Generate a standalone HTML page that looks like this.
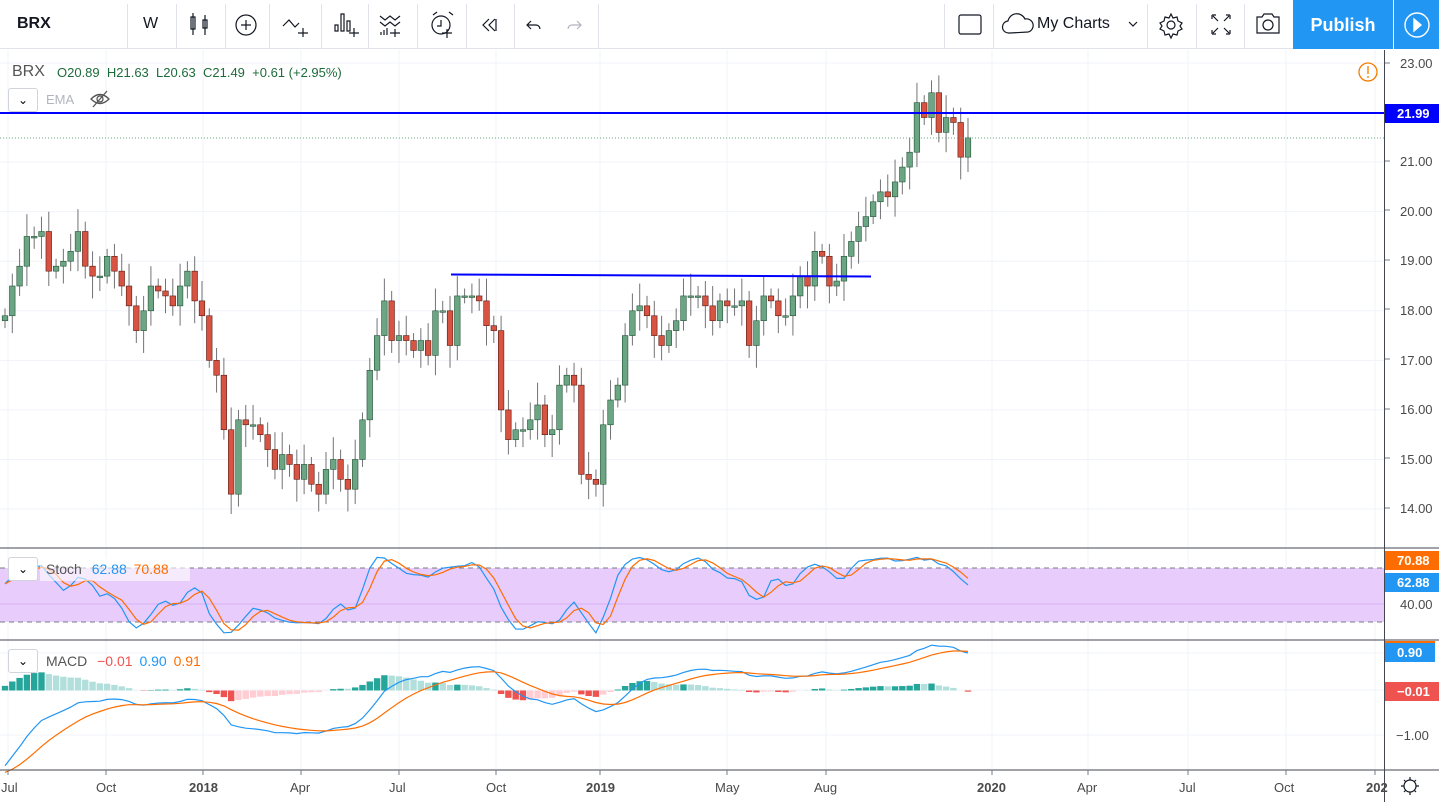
<!DOCTYPE html>
<html><head><meta charset="utf-8"><style>
*{margin:0;padding:0;box-sizing:border-box}
body{width:1439px;height:802px;overflow:hidden;background:#fff;font-family:"Liberation Sans",sans-serif;position:relative}
.tb{position:absolute;top:0;left:0;width:1439px;height:49px;border-bottom:1px solid #e0e3eb;background:#fff}
.sep{position:absolute;top:4px;width:1px;height:44px;background:#e0e3eb}
.t{position:absolute;font-size:13px}
.ax{position:absolute;font-size:13px;color:#4a4a4a}
.lbl{position:absolute;left:1385px;width:54px;height:19px;color:#fff;font-size:13px;font-weight:bold;line-height:19px;padding-left:12px}
</style></head><body>
<div class="tb">
 <div class="t" style="left:17px;top:15px;font-size:16px;font-weight:bold;color:#131722">BRX</div>
 <div class="sep" style="left:127px"></div>
 <div class="t" style="left:143px;top:15px;font-size:16px;color:#131722">W</div>
 <div class="sep" style="left:176px"></div>
 <div class="sep" style="left:225px"></div>
 <div class="sep" style="left:269px"></div><div class="sep" style="left:321px"></div><div class="sep" style="left:368px"></div><div class="sep" style="left:417px"></div><div class="sep" style="left:466px"></div><div class="sep" style="left:514px"></div><div class="sep" style="left:598px"></div>
 <div class="sep" style="left:944px"></div><div class="sep" style="left:993px"></div><div class="sep" style="left:1147px"></div><div class="sep" style="left:1196px"></div><div class="sep" style="left:1244px"></div>
 <svg style="position:absolute;left:0;top:0" width="1300" height="49" fill="none" stroke="#131722" stroke-width="1.2">
  <path d="M193 13v22M191 17h4v12h-4zM205 15v20M203 20h4v8h-4z"/>
  <circle cx="246" cy="25" r="10"/><path d="M246 20v10M241 25h10"/>
  <path d="M283 26l6-6 6 7 4-4M303 28v9M298 33h10"/>
  <path d="M335 25h3v6h-3zM341 14h3v17h-3zM347 21h3v10h-3zM354 28v9M349 33h10"/>
  <path d="M380 16l5 4 5-4 5 4 5-4M380 22l5 4 5-4 5 4 5-4M381 32v3M384 30v5M387 28v7M395 29v8M390 33h10"/>
  <circle cx="441" cy="25" r="9"/><path d="M441 20v6h-4M433 15l4-3M449 12l4 3M447 29v9M442 33h10"/>
  <path d="M489 19l-6 6 6 6M495 19l-6 6 6 6M496 19v12"/>
  <path d="M531 21l-4 4 4 4M527 25h9a4 4 0 014 4"/>
  <path stroke="#b2b5be" d="M577 21l4 4-4 4M581 25h-9a4 4 0 00-4 4"/>
 </svg>
 <svg style="position:absolute;left:940px;top:0" width="360" height="49" fill="none" stroke="#131722" stroke-width="1.2">
  <rect x="19" y="15" width="22" height="19" rx="2"/>
  <path d="M70 33h-1a6 6 0 01-1-12 9 9 0 0117-2 6 6 0 013 13z"/>
  <path d="M189 22l4 4 4-4"/>
  <circle cx="231" cy="25" r="4"/><path d="M231 14l2 4 4-1 1 4 4 2-2 3 2 3-4 2-1 4-4-1-2 4-2-4-4 1-1-4-4-2 2-3-2-3 4-2 1-4 4 1z"/>
  <path d="M272 15h4M272 15v4M290 15h-4M290 15v4M272 34h4M272 34v-4M290 34h-4M290 34v-4M273 16l5 5M289 16l-5 5M273 33l5-5M289 33l-5-5"/>
  <path d="M317 17h5l2-3h8l2 3h5v16h-22z"/><circle cx="328" cy="25" r="5"/>
 </svg>
 <div class="t" style="left:1037px;top:15px;font-size:16px;color:#131722">My Charts</div>
 <div style="position:absolute;left:1293px;top:0;width:100px;height:49px;background:#2196f3;color:#fff;font-size:18px;font-weight:bold;text-align:center;line-height:50px">Publish</div>
 <div style="position:absolute;left:1394px;top:0;width:45px;height:49px;background:#2196f3"><svg width="45" height="49" fill="none" stroke="#fff" stroke-width="1.4"><circle cx="23" cy="25" r="12"/><path d="M20 19l7 6-7 6z" fill="#fff"/></svg></div>
</div>

<svg id="c" style="position:absolute;left:0;top:50px" width="1439" height="752"></svg>

<div class="t" style="left:12px;top:63px;font-size:16px;color:#555">BRX</div>
<div class="t" style="left:57px;top:65px;color:#1e6b3a">O20.89&nbsp; H21.63&nbsp; L20.63&nbsp; C21.49&nbsp; +0.61 (+2.95%)</div>
<div style="position:absolute;left:8px;top:88px;width:30px;height:24px;border:1px solid #d1d4dc;border-radius:3px;background:#fff;font-size:12px;text-align:center;line-height:22px">&#8964;</div>
<div class="t" style="left:46px;top:92px;color:#b2b5be">EMA</div>
<svg style="position:absolute;left:89px;top:89px" width="22" height="20" fill="none" stroke="#555" stroke-width="1.3"><path d="M2 10q9-9 18 0q-9 9-18 0z"/><circle cx="11" cy="10" r="3"/><path d="M4 18L18 2"/></svg>
<svg style="position:absolute;left:1357px;top:61px" width="22" height="22" fill="none" stroke="#f57c00" stroke-width="1.3"><circle cx="11" cy="11" r="9"/><path d="M11 5v8M11 15v2"/></svg>

<div style="position:absolute;left:8px;top:557px;width:30px;height:24px;border:1px solid #d1d4dc;border-radius:3px;background:#fff;font-size:12px;text-align:center;line-height:22px">&#8964;</div>
<div style="position:absolute;left:40px;top:557px;width:150px;height:24px;background:rgba(255,255,255,.6)"></div>
<div class="t" style="left:46px;top:561px;font-size:14px;color:#555">Stoch <span style="color:#2196f3;margin-left:6px">62.88</span> <span style="color:#ff6d00;margin-left:3px">70.88</span></div>
<div style="position:absolute;left:8px;top:649px;width:30px;height:24px;border:1px solid #d1d4dc;border-radius:3px;background:#fff;font-size:12px;text-align:center;line-height:22px">&#8964;</div>
<div class="t" style="left:46px;top:653px;font-size:14px;color:#555">MACD <span style="color:#ef5350;margin-left:6px">&minus;0.01</span> <span style="color:#2196f3;margin-left:3px">0.90</span> <span style="color:#ff6d00;margin-left:3px">0.91</span></div>

<div class="ax" style="left:1400px;top:56px">23.00</div>
<div class="ax" style="left:1400px;top:154px">21.00</div>
<div class="ax" style="left:1400px;top:204px">20.00</div>
<div class="ax" style="left:1400px;top:253px">19.00</div>
<div class="ax" style="left:1400px;top:303px">18.00</div>
<div class="ax" style="left:1400px;top:353px">17.00</div>
<div class="ax" style="left:1400px;top:402px">16.00</div>
<div class="ax" style="left:1400px;top:452px">15.00</div>
<div class="ax" style="left:1400px;top:501px">14.00</div>
<div class="lbl" style="top:104px;background:#0000ff">21.99</div>
<div class="lbl" style="top:551px;background:#ff6d00">70.88</div>
<div class="lbl" style="top:573px;background:#2196f3">62.88</div>
<div class="ax" style="left:1400px;top:597px">40.00</div>
<div style="position:absolute;left:1385px;top:641px;width:50px;height:2px;background:#ff6d00"></div>
<div class="lbl" style="top:643px;background:#2196f3;width:50px">0.90</div>
<div class="lbl" style="top:682px;background:#ef5350">&minus;0.01</div>
<div class="ax" style="left:1396px;top:728px">&minus;1.00</div>

<div class="ax" style="left:1px;top:780px">Jul</div>
<div class="ax" style="left:96px;top:780px">Oct</div>
<div class="ax" style="left:189px;top:780px;font-weight:bold">2018</div>
<div class="ax" style="left:290px;top:780px">Apr</div>
<div class="ax" style="left:389px;top:780px">Jul</div>
<div class="ax" style="left:486px;top:780px">Oct</div>
<div class="ax" style="left:586px;top:780px;font-weight:bold">2019</div>
<div class="ax" style="left:715px;top:780px">May</div>
<div class="ax" style="left:814px;top:780px">Aug</div>
<div class="ax" style="left:977px;top:780px;font-weight:bold">2020</div>
<div class="ax" style="left:1077px;top:780px">Apr</div>
<div class="ax" style="left:1179px;top:780px">Jul</div>
<div class="ax" style="left:1274px;top:780px">Oct</div>
<div class="ax" style="left:1366px;top:780px;font-weight:bold">202</div>
<svg style="position:absolute;left:1399px;top:775px" width="22" height="22" fill="none" stroke="#131722" stroke-width="1.2"><circle cx="11" cy="11" r="6"/><path d="M11 2v3M11 17v3M2 11h3M17 11h3M5 5l2 2M15 15l2 2M5 17l2-2M15 7l2-2"/></svg>

<script>
var C=[17.9,18.5,18.9,19.5,19.5,19.6,18.8,18.9,19.0,19.2,19.6,18.9,18.7,18.7,19.1,18.8,18.5,18.1,17.6,18.0,18.5,18.4,18.3,18.1,18.5,18.8,18.2,17.9,17.0,16.7,15.6,14.3,15.8,15.7,15.7,15.5,15.2,14.8,15.1,14.9,14.6,14.9,14.5,14.3,14.8,15.0,14.6,14.4,15.0,15.8,16.8,17.5,18.2,17.4,17.5,17.4,17.2,17.4,17.1,18.0,18.0,17.3,18.3,18.3,18.3,18.2,17.7,17.6,16.0,15.4,15.6,15.6,15.8,16.1,15.5,15.6,16.5,16.7,16.5,14.7,14.6,14.5,15.7,16.2,16.5,17.5,18.0,18.1,17.9,17.5,17.3,17.6,17.8,18.3,18.3,18.3,18.1,17.8,18.2,18.1,18.1,18.2,17.3,17.8,18.3,18.2,17.9,17.9,18.3,18.7,18.5,19.2,19.1,18.5,18.6,19.1,19.4,19.7,19.9,20.2,20.4,20.3,20.6,20.9,21.2,22.2,21.9,22.4,21.6,21.9,21.8,21.1,21.49];
var n=C.length,x0=5,x1=968,dx=(x1-x0)/(n-1),O=50;
function py(p){return 63+(23-p)*49.56-O}
var s='';
[8,106,203,301,399,496,600,727,826,992,1088,1188,1286,1375].forEach(function(x){s+='<line x1="'+x+'" y1="0" x2="'+x+'" y2="720" stroke="#f0f3fa"/>'});
for(var p=14;p<=23;p++){var y=py(p);s+='<line x1="0" y1="'+y+'" x2="1384" y2="'+y+'" stroke="#f0f3fa"/>';}
s+='<rect x="0" y="518" width="1384" height="54" fill="#e8ccfb"/>';
s+='<line x1="0" y1="554" x2="1384" y2="554" stroke="#d7b0f5"/>';
s+='<line x1="0" y1="518" x2="1384" y2="518" stroke="#787b86" stroke-dasharray="5,4"/><line x1="0" y1="572" x2="1384" y2="572" stroke="#787b86" stroke-dasharray="5,4"/>';
[603,640,685].forEach(function(y){s+='<line x1="0" y1="'+y+'" x2="1384" y2="'+y+'" stroke="#f0f3fa"/>'});
var H=[],L=[];
for(var i=0;i<n;i++){var o=i?C[i-1]:17.8,c=C[i],x=x0+i*dx;var hi=Math.max(o,c)+0.15+((i*37)%7)/20,lo=Math.min(o,c)-0.15-((i*53)%7)/20;H.push(hi);L.push(lo);
var col=c>=o?'#6ba583':'#d75442',bc=c>=o?'#225437':'#5b1a13';
s+='<line x1="'+x+'" y1="'+py(hi)+'" x2="'+x+'" y2="'+py(lo)+'" stroke="#737375"/>';
var yt=py(Math.max(o,c)),h=Math.max(1.5,Math.abs(o-c)*49.56);
s+='<rect x="'+(x-2.8)+'" y="'+yt+'" width="5.6" height="'+h+'" fill="'+col+'" stroke="'+bc+'" stroke-width="0.6"/>';}
s+='<line x1="0" y1="63" x2="1384" y2="63" stroke="#0000ff" stroke-width="2"/>';
s+='<line x1="451" y1="224.5" x2="871" y2="226.5" stroke="#0000ff" stroke-width="2"/>';
s+='<line x1="0" y1="88" x2="1384" y2="88" stroke="#6ba583" stroke-dasharray="1,2"/>';
function sy(v){return 590-v*0.9}
var K=[];for(var i=0;i<n;i++){var a=Math.max(0,i-13),mx=-1e9,mn=1e9;for(var j=a;j<=i;j++){mx=Math.max(mx,H[j]);mn=Math.min(mn,L[j]);}K.push((C[i]-mn)/(mx-mn)*100);}
function sma(a,k){return a.map(function(v,i){var s=0,c=0;for(var j=Math.max(0,i-k+1);j<=i;j++){s+=a[j];c++}return s/c})}
var Ks=sma(K,3),D=sma(Ks,3);
function pl(a,f,col){var d='';a.forEach(function(v,i){d+=(i?'L':'M')+(x0+i*dx).toFixed(1)+' '+f(v).toFixed(1)});return '<path d="'+d+'" fill="none" stroke="'+col+'" stroke-width="1.2"/>'}
s+=pl(Ks,sy,'#2196f3')+pl(D,sy,'#ff6d00');
function ema(a,k,seed){var m=2/(k+1),r=[],e=seed;a.forEach(function(v){e=v*m+e*(1-m);r.push(e)});return r}
var e12=ema(C,12,C[0]-0.6),e26=ema(C,26,C[0]+1.3),M=e12.map(function(v,i){return v-e26[i]}),S=ema(M,9,-1.9);
function my(v){return 640.5-v*44}
for(var i=0;i<n;i++){var hh=M[i]-S[i],x=x0+i*dx,prev=i?M[i-1]-S[i-1]:0;var col=hh>=0?(hh>=prev?'#26a69a':'#b2dfdb'):(hh<prev?'#ef5350':'#ffcdd2');var y=my(0),y2=my(hh*0.7);s+='<rect x="'+(x-3.2)+'" y="'+Math.min(y,y2)+'" width="6.4" height="'+Math.abs(y2-y)+'" fill="'+col+'"/>';}
s+=pl(M,my,'#2196f3')+pl(S,my,'#ff6d00');
s+='<line x1="0" y1="498" x2="1439" y2="498" stroke="#434651"/><line x1="0" y1="590" x2="1439" y2="590" stroke="#434651"/><line x1="0" y1="720" x2="1439" y2="720" stroke="#434651"/>';
s+='<line x1="1384.5" y1="0" x2="1384.5" y2="752" stroke="#434651"/>';
[13,111,160,210,259,309,359,408,458,507].forEach(function(y){s+='<line x1="1385" y1="'+y+'" x2="1390" y2="'+y+'" stroke="#787b86"/>'});
[8,106,203,301,399,496,600,727,826,992,1088,1188,1286,1375].forEach(function(x){s+='<line x1="'+x+'" y1="720" x2="'+x+'" y2="725" stroke="#787b86"/>'});
document.getElementById('c').innerHTML=s;
</script>
</body></html>
